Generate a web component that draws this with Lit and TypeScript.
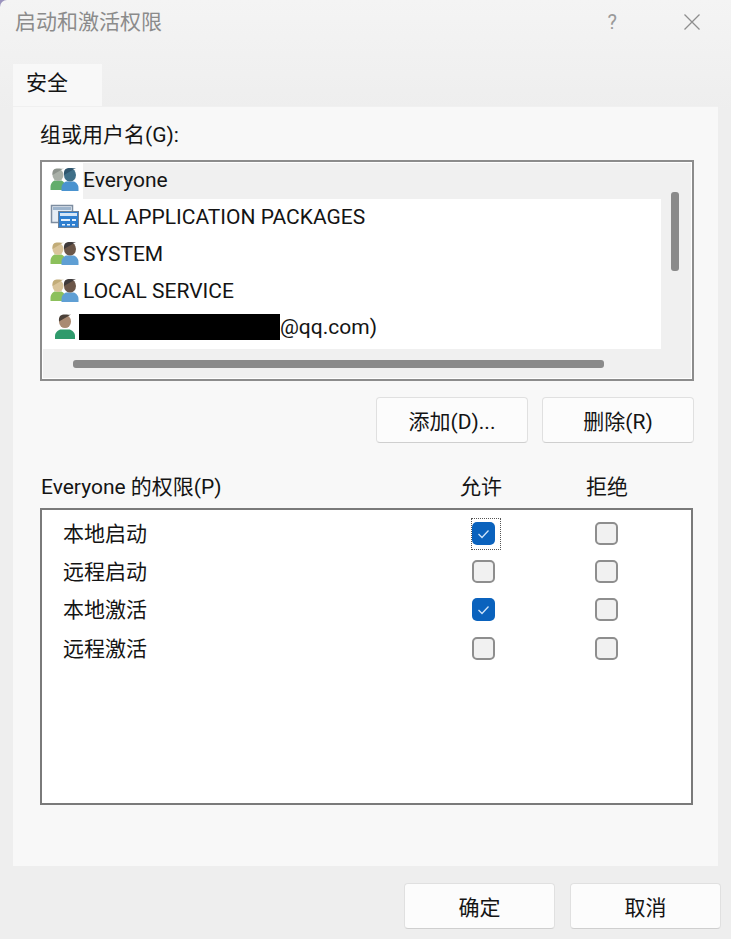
import { LitElement, html, css, svg } from "lit";
import { customElement } from "lit/decorators.js";

// head plus shoulders, coordinates inside a 30x30 icon box
const person = (cx: number, cy: number, r: number, bw: number, bottom: number, c: string[]) => svg`
  <path d="M${cx - bw} ${bottom}v-3c0-4 ${bw * 0.4}-6.500 ${bw * 0.6}-6.500h${bw * 0.8}c${bw * 0.2} 0 ${bw * 0.6} 2.500 ${bw * 0.6} 6.500v3z" fill=${c[2]} />
  <ellipse cx=${cx} cy=${cy} rx=${r} ry=${r + 0.6} fill=${c[0]} />
  <path d="M${cx - r} ${cy}c-.5-${r} 2-${r + 1} ${r}-${r + 1}s${r + 0.5} 1 ${r}-0 ${r + 1} ${r}c-1-2.400-2.500-3-${r}-3s-${r - 1.500} .6-${r} 3z" fill=${c[1]} />`;

const usersIcon = (a: string[], b: string[]) => html`<svg class="ico" viewBox="0 0 30 30">
  ${person(9, 10, 5.500, 7.500, 25, a)}
  ${person(21, 10, 6, 8.500, 26, b)}
</svg>`;

const userIcon = html`<svg class="ico" viewBox="0 0 30 30">
  ${person(16, 9.500, 6, 10, 27, ["#a98a72", "#4a4038", "#2f9a6c"])}
</svg>`;

const appIcon = html`<svg class="ico" viewBox="0 0 30 30">
  <rect x="2.500" y="3.500" width="21" height="17" fill="#e6edf5" stroke="#7d8da0" stroke-width="1.500" />
  <rect x="4" y="5" width="18" height="3" fill="#9db4cc" />
  <rect x="9.500" y="9.500" width="20" height="16" fill="#2f7fd0" stroke="#6f8196" />
  <rect x="11" y="11" width="17" height="3" fill="#d6e6f6" />
  <path d="M12 17h9v2h-9zM23 17h4v2h-4zM13 22h3v1.500h-3zM18 22h3v1.500h-3zM23 22h3v1.500h-3z" fill="#e8f2fb" />
</svg>`;

const grayBlue = usersIcon(["#a9b0a8", "#8c938c", "#63ad6c"], ["#3f6f88", "#2f566e", "#4a93cf"]);
const tanBlue = usersIcon(["#d9c49a", "#c2ac78", "#8cc05c"], ["#6b5648", "#3f3a3a", "#5f9fd4"]);

const principals = [
  { icon: grayBlue, name: "Everyone", selected: true },
  { icon: appIcon, name: "ALL APPLICATION PACKAGES" },
  { icon: tanBlue, name: "SYSTEM" },
  { icon: tanBlue, name: "LOCAL SERVICE" },
];

const perms = [
  { name: "本地启动", allow: true, focus: true },
  { name: "远程启动", allow: false },
  { name: "本地激活", allow: true },
  { name: "远程激活", allow: false },
];

@customElement("app-root")
export class AppRoot extends LitElement {
  static styles = css`
    :host {
      display: block;
      width: 731px;
      height: 939px;
      overflow: hidden;
      background: #9a93bd;
      font-family: Roboto, "Noto Sans CJK SC", sans-serif;
      font-size: 21px;
      color: #141414;
    }
    .window {
      height: 939px;
      border-top-left-radius: 7px;
      background: linear-gradient(#f4f4f4, #eeeeee 110px, #eeeeee);
    }
    .titlebar {
      height: 64px;
      box-sizing: border-box;
      padding: 7px 31px 0 15px;
      display: flex;
      align-items: flex-start;
      color: #8b8b8b;
      line-height: 30px;
    }
    .title {
      flex: 1;
    }
    .help {
      margin-right: 67px;
      font-size: 20px;
      color: #9a9a9a;
    }
    .close {
      margin-top: 7px;
    }
    .tab {
      width: 89px;
      height: 42px;
      margin-left: 13px;
      box-sizing: border-box;
      padding: 4px 0 0 13px;
      background: #f8f8f8;
      line-height: 30px;
    }
    .panel {
      margin-left: 13px;
      width: 705px;
      height: 760px;
      box-sizing: border-box;
      background: #f8f8f8;
      border-top: 1px solid #f0f0f0;
      padding: 13px 24px 0 27px;
    }
    .label {
      height: 40px;
      line-height: 30px;
    }
    .listbox {
      width: 654px;
      height: 221px;
      box-sizing: border-box;
      border: 2px solid #8c8c8c;
      background: #f0f0f0;
      display: grid;
      grid-template-columns: 618px 1fr;
      grid-template-rows: 187px 1fr;
      padding-left: 1px;
      outline: 1px solid #fff;
      outline-offset: -3px;
    }
    .rows {
      background: #fff;
      overflow: hidden;
    }
    .row {
      height: 36.750px;
      display: flex;
      align-items: center;
      white-space: nowrap;
    }
    .ico {
      width: 30px;
      height: 30px;
      margin: 0 5px 0 6px;
      flex: none;
    }
    .name {
      flex: 1;
      height: 100%;
      display: flex;
      align-items: center;
      margin-left: -1px;
    }
    .row.selected .name {
      background: #f0f0f0;
    }
    .redacted {
      width: 201px;
      height: 26px;
      margin-left: -4px;
      background: #000;
    }
    .vtrack {
      padding: 30px 0 0 10px;
    }
    .vthumb {
      width: 8px;
      height: 79px;
      border-radius: 3px;
      background: #8a8a8a;
    }
    .htrack {
      padding: 11px 0 0 30px;
    }
    .hthumb {
      width: 531px;
      height: 8px;
      border-radius: 3px;
      background: #8a8a8a;
    }
    .actions {
      display: flex;
      justify-content: flex-end;
      gap: 14px;
      margin-top: 16px;
    }
    .actions .btn {
      width: 152px;
    }
    .btn {
      width: 151px;
      height: 46px;
      box-sizing: border-box;
      border: 1px solid #e0e0e0;
      border-bottom-color: #cfcfcf;
      border-radius: 4px;
      background: #fcfcfc;
      display: flex;
      align-items: center;
      justify-content: center;
    }
    .perm-head {
      display: grid;
      grid-template-columns: 419px 126px auto;
      padding-left: 1px;
      margin-top: 29px;
      height: 36px;
      line-height: 30px;
    }
    .permbox {
      width: 653px;
      height: 297px;
      box-sizing: border-box;
      border: 2px solid #7a7a7a;
      background: #fff;
      padding-top: 4px;
    }
    .perm {
      height: 38.400px;
      display: grid;
      grid-template-columns: 409px 123px 23px;
      align-items: center;
      padding-left: 21px;
      line-height: 30px;
    }
    .perm-name {
      padding-top: 1px;
    }
    .cell {
      position: relative;
      width: 23px;
      height: 23px;
    }
    .check {
      width: 23px;
      height: 23px;
      box-sizing: border-box;
      border: 2px solid #8e8e8e;
      border-radius: 5px;
      background: #f1f1f1;
      display: block;
    }
    .check.on {
      border: none;
      background: #0a62bd;
    }
    .focus {
      position: absolute;
      inset: -4px -6px -5px -1px;
      border: 1.500px dotted #555;
    }
    .footer {
      display: flex;
      justify-content: flex-end;
      gap: 15px;
      padding: 17px 10px 0 0;
    }
  `;

  renderCheck(on: boolean, focus = false) {
    return html`<div class="cell">
      ${on
        ? html`<svg class="check on" viewBox="0 0 23 23">
            <path d="M6.500 12l3.500 3.500 6.500-7" fill="none" stroke="#cfe4fa" stroke-width="1.300" />
          </svg>`
        : html`<span class="check"></span>`}
      ${focus ? html`<span class="focus"></span>` : ""}
    </div>`;
  }

  render() {
    return html`
      <div class="window">
        <div class="titlebar">
          <span class="title">启动和激活权限</span>
          <span class="help">?</span>
          <svg class="close" width="16" height="16" viewBox="0 0 16 16">
            <path d="M.5.5l15 15M15.500.5l-15 15" stroke="#8e8e8e" stroke-width="1.300" fill="none" />
          </svg>
        </div>
        <div class="tab">安全</div>
        <div class="panel">
          <div class="label">组或用户名(G):</div>
          <div class="listbox">
            <div class="rows">
              ${principals.map(
                (p) => html`<div class="row ${p.selected ? "selected" : ""}">
                  ${p.icon}<span class="name">${p.name}</span>
                </div>`
              )}
              <div class="row">
                ${userIcon}<span class="name"><span class="redacted"></span>@qq.com)</span>
              </div>
            </div>
            <div class="vtrack"><div class="vthumb"></div></div>
            <div class="htrack"><div class="hthumb"></div></div>
          </div>
          <div class="actions">
            <div class="btn">添加(D)...</div>
            <div class="btn">删除(R)</div>
          </div>
          <div class="perm-head">
            <span>Everyone 的权限(P)</span>
            <span>允许</span>
            <span>拒绝</span>
          </div>
          <div class="permbox">
            ${perms.map(
              (p) => html`<div class="perm">
                <span class="perm-name">${p.name}</span>
                ${this.renderCheck(p.allow, p.focus)}
                ${this.renderCheck(false)}
              </div>`
            )}
          </div>
        </div>
        <div class="footer">
          <div class="btn">确定</div>
          <div class="btn">取消</div>
        </div>
      </div>
    `;
  }
}
